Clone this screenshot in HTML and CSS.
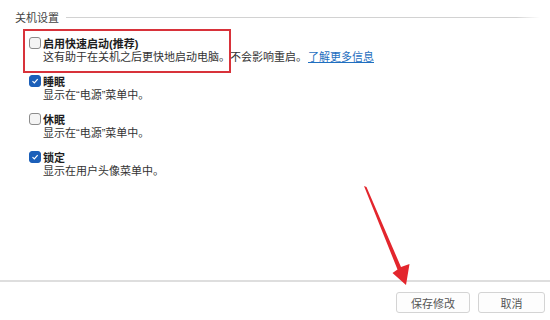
FILE: index.html
```html
<!DOCTYPE html>
<html lang="zh-CN">

<head>
  <meta charset="utf-8">
  <link rel="stylesheet" href="styles.css">
</head>

<body>
  <div class="page">
    <div class="content">
      <div class="group-title">
        <span>关机设置</span>
        <span class="rule"></span>
      </div>

      <div class="options">
        <div class="option">
          <div class="check-row">
            <span class="box"></span>
            <span class="label">启用快速启动(推荐)</span>
          </div>
          <p class="desc">这有助于在关机之后更快地启动电脑。不会影响重启。<a href="#" class="more">了解更多信息</a></p>
          <span class="mark"></span>
        </div>

        <div class="option">
          <div class="check-row">
            <span class="box checked">
              <svg viewBox="0 0 12 12"><path d="M3 6.2 L5.2 8.3 L9.2 3.8" /></svg>
            </span>
            <span class="label">睡眠</span>
          </div>
          <p class="desc">显示在“电源”菜单中。</p>
        </div>

        <div class="option">
          <div class="check-row">
            <span class="box"></span>
            <span class="label">休眠</span>
          </div>
          <p class="desc">显示在“电源”菜单中。</p>
        </div>

        <div class="option">
          <div class="check-row">
            <span class="box checked">
              <svg viewBox="0 0 12 12"><path d="M3 6.2 L5.2 8.3 L9.2 3.8" /></svg>
            </span>
            <span class="label">锁定</span>
          </div>
          <p class="desc">显示在用户头像菜单中。</p>
        </div>
      </div>
    </div>

    <div class="footer">
      <button class="btn save">保存修改</button>
      <button class="btn cancel">取消</button>
    </div>
  </div>

  <!-- red arrow drawn over the page -->
  <svg class="arrow" viewBox="0 0 550 320" width="550" height="320">
    <polygon points="364,186 366.5,187 401,267 409.5,264 406,285 392.5,273 397.5,269.5" />
  </svg>
</body>

</html>
```

FILE: styles.css
```css
body {
  margin: 0;
  background: #ffffff;
  font-family: "Liberation Sans", "Noto Sans CJK SC", sans-serif;
  font-size: 11px;
  color: #2b2b2b;
}

.page {
  display: flex;
  flex-direction: column;
  height: 320px;
}

.content {
  flex: 1;
}

.group-title {
  display: flex;
  align-items: center;
  gap: 7px;
  margin: 9px 10px 0 15px;
  height: 16px;
  color: #444;
}

.group-title .rule {
  flex: 1;
  height: 1px;
  background: linear-gradient(to right, #d2d2d2 95%, #ffffff);
}

.options {
  display: flex;
  flex-direction: column;
  gap: 10px;
  margin: 11px 0 0 29px;
}

.option {
  position: relative;
}

.check-row {
  display: flex;
  align-items: center;
  gap: 2px;
  height: 14px;
}

.box {
  width: 12px;
  height: 12px;
  box-sizing: border-box;
  border: 1px solid #8c8c8c;
  border-radius: 3px;
  background: #f4f4f4;
  display: flex;
}

.box.checked {
  border-color: #1b5fb9;
  background: #1b5fb9;
}

.box svg {
  width: 10px;
  height: 10px;
  fill: none;
  stroke: #ffffff;
  stroke-width: 1.4;
}

.label {
  font-weight: 700;
  color: #1e1e1e;
}

.desc {
  margin: 0 0 0 14px;
  line-height: 14px;
  color: #333;
}

.more {
  color: #1f6fc0;
  text-decoration: underline;
  margin-left: 1px;
}

/* red annotation around the first option */
.mark {
  position: absolute;
  left: -6px;
  top: -7px;
  width: 208px;
  height: 44px;
  box-sizing: border-box;
  border: 2px solid #d8323a;
}

.footer {
  height: 40px;
  box-sizing: border-box;
  border-top: 2px solid #dedede;
  display: flex;
  justify-content: flex-end;
  gap: 8px;
  padding: 10px 5px 0 0;
}

.btn {
  height: 21px;
  box-sizing: border-box;
  border: 1px solid #d4d4d4;
  border-radius: 3px;
  background: #fdfdfd;
  font-family: "Liberation Sans", "Noto Sans CJK SC", sans-serif;
  font-size: 11px;
  color: #555;
  padding: 0;
}

.save {
  width: 74px;
}

.cancel {
  width: 67px;
}

.arrow {
  position: absolute;
  left: 0;
  top: 0;
  pointer-events: none;
}

.arrow polygon {
  fill: #e3262d;
}
```
